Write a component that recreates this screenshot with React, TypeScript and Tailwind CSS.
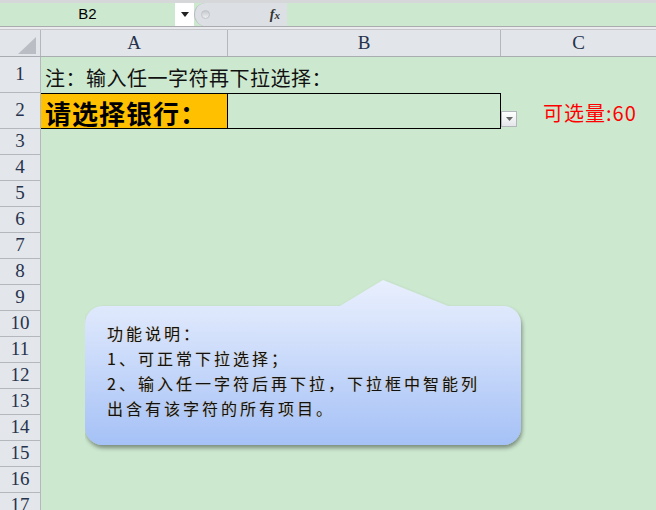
import React from 'react';

const serif = "font-['Liberation_Serif','Noto_Sans_CJK_SC',serif]";
const cjk = "font-['Noto_Sans_CJK_SC','Liberation_Sans',sans-serif]";

const rows = [3, 4, 5, 6, 7, 8, 9, 10, 11, 12, 13, 14, 15, 16, 17];

const RowHead = ({ n, h }: { n: number; h: string }) => (
    <div className={`w-[41px] ${h} shrink-0 flex items-center justify-center bg-[#e3e6ea] border-r border-b border-[#b4b7bc] text-[19px] text-[#26334d] ${serif}`}>
        {n}
    </div>
);

const Callout = () => (
    <div className="absolute left-[85px] top-[279px] w-[448px] h-[176px]">
        <svg width="448" height="176" className="absolute inset-0">
            <defs>
                <linearGradient id="cg" x1="0" y1="0" x2="0" y2="1">
                    <stop offset="0" stopColor="#e8effd" />
                    <stop offset="0.25" stopColor="#dae5fc" />
                    <stop offset="1" stopColor="#a5c1f6" />
                </linearGradient>
                <filter id="sh" x="-5%" y="-5%" width="110%" height="115%">
                    <feDropShadow dx="1" dy="3" stdDeviation="2" floodColor="#000" floodOpacity="0.4" />
                </filter>
            </defs>
            <path
                d="M18 27 H255 L298 1 L363 27 H418 A18 18 0 0 1 436 45 V148 A18 18 0 0 1 418 166 H18 A18 18 0 0 1 0 148 V45 A18 18 0 0 1 18 27 Z"
                fill="url(#cg)"
                filter="url(#sh)"
            />
        </svg>
        <div className={`absolute left-[22px] top-[42px] text-[16px] leading-[25px] tracking-[3px] text-[#111] whitespace-nowrap ${cjk} [text-shadow:0_0_1px_rgba(230,170,40,0.5)]`}>
            <div>功能说明：</div>
            <div>1、可正常下拉选择；</div>
            <div>2、输入任一字符后再下拉，下拉框中智能列</div>
            <div>出含有该字符的所有项目。</div>
        </div>
    </div>
);

export default function App() {
    return (
        <div className="relative w-[656px] h-[510px] overflow-hidden bg-[#cce8cf]">
            {/* top strip */}
            <div className="h-[3px] bg-[#d6d7d9]" />
            {/* formula bar */}
            <div className="h-[23px] flex">
                <div className="w-[175px] flex items-center justify-center text-[15px] text-black font-['Liberation_Sans',sans-serif]">B2</div>
                <div className="w-[19px] bg-white flex items-center justify-center">
                    <svg width="8" height="5" viewBox="0 0 8 5"><path d="M0 0 H8 L4 5 Z" fill="#222" /></svg>
                </div>
                <div className="w-[93px] bg-[#dcdfe3] rounded-l-[12px] border-l border-[#b8bbc0] flex items-center justify-between pl-[6px] pr-[7px]">
                    <div className="w-[9px] h-[9px] rounded-full bg-gradient-to-b from-[#c6c9ce] to-[#eef0f2] border border-[#c0c3c8]" />
                    <span className="text-[14px] italic font-bold text-[#333] font-['Liberation_Serif',serif]">f<span className="text-[11px]">x</span></span>
                </div>
                <div className="flex-1" />
            </div>
            <div className="h-[4px] bg-[#e8eaed] border-t border-[#a9abae] border-b border-b-[#c4c6c9]" />
            {/* column header */}
            <div className={`h-[27px] flex bg-[#e2e5e9] border-b border-[#a9acb1] text-[19px] text-[#26334d] ${serif}`}>
                <div className="w-[41px] border-r border-[#b4b7bc] flex items-end justify-end pr-[4px] pb-[2px]">
                    <svg width="18" height="17" viewBox="0 0 18 17"><path d="M18 0 V17 H0 Z" fill="#babec4" /></svg>
                </div>
                <div className="w-[187px] border-r border-[#b4b7bc] flex items-center justify-center">A</div>
                <div className="w-[273px] border-r border-[#b4b7bc] flex items-center justify-center">B</div>
                <div className="flex-1 flex items-center justify-center">C</div>
            </div>
            {/* row 1 */}
            <div className="h-[36px] flex">
                <RowHead n={1} h="h-[36px]" />
                <div className={`flex-1 pl-[4px] pt-[10px] text-[20px] leading-[22px] tracking-[0.5px] text-[#111] whitespace-nowrap ${cjk}`}>
                    注：输入任一字符再下拉选择：
                </div>
            </div>
            {/* row 2 */}
            <div className="h-[36px] flex">
                <RowHead n={2} h="h-[36px]" />
                <div className={`w-[187px] h-[36px] bg-[#ffc000] border-y border-r border-black pl-[4px] pt-[5px] text-[26px] leading-[28px] font-bold tracking-[1px] text-black whitespace-nowrap ${cjk}`}>
                    请选择银行：
                </div>
                <div className="w-[273px] h-[36px] border-y border-r border-black" />
                <div className="relative flex-1">
                    <div className="absolute left-0 top-[18px] w-[16px] h-[16px] bg-gradient-to-b from-white to-[#e4e6e9] border border-[#b3b6ba] flex items-center justify-center">
                        <svg width="7" height="4" viewBox="0 0 7 4"><path d="M0 0 H7 L3.5 4 Z" fill="#666" /></svg>
                    </div>
                    <div className={`pl-[42px] pt-[9px] text-[20px] leading-[22px] tracking-[1px] text-[#ff0000] whitespace-nowrap ${cjk}`}>
                        可选量:60
                    </div>
                </div>
            </div>
            {rows.map(n => (
                <div key={n} className="h-[26px] flex">
                    <RowHead n={n} h="h-[26px]" />
                    <div className="flex-1" />
                </div>
            ))}
            <Callout />
        </div>
    );
}
